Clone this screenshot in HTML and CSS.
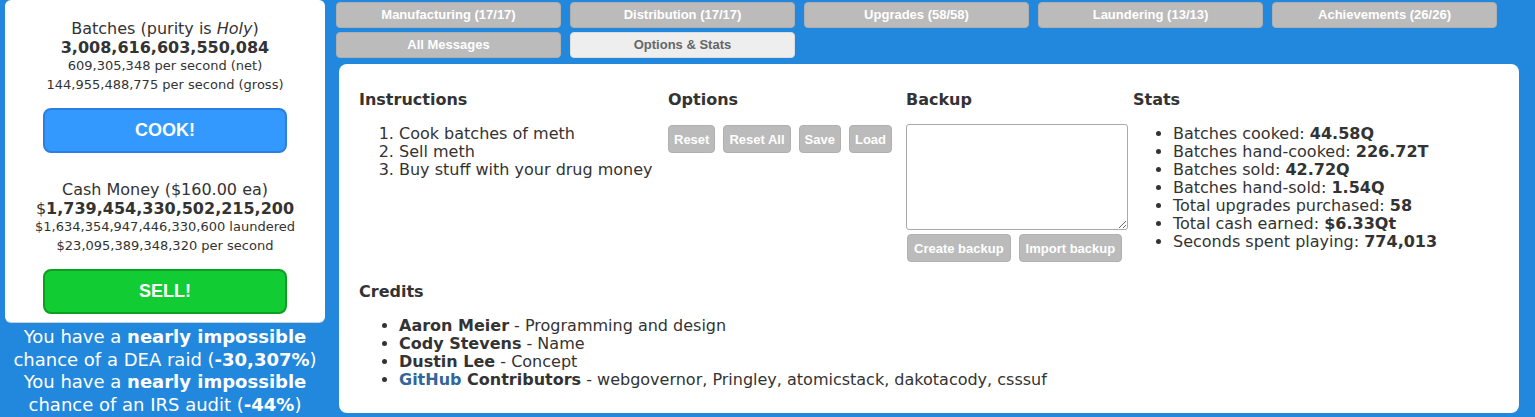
FILE: index.html
```html
<!DOCTYPE html>
<html>
<head>
<meta charset="utf-8">
<link rel="stylesheet" href="styles.css">
</head>
<body>
<div class="page">
  <div class="left">
    <div class="panel">
      <div class="big">Batches (purity is <i>Holy</i>)</div>
      <div class="big"><b>3,008,616,603,550,084</b></div>
      <div class="small">609,305,348 per second (net)</div>
      <div class="small">144,955,488,775 per second (gross)</div>
      <button class="action cook">COOK!</button>
      <div class="big cash">Cash Money ($160.00 ea)</div>
      <div class="big">$<b>1,739,454,330,502,215,200</b></div>
      <div class="small">$1,634,354,947,446,330,600 laundered</div>
      <div class="small">$23,095,389,348,320 per second</div>
      <button class="action sell">SELL!</button>
    </div>
    <div class="risk">
      <div>You have a <b>nearly impossible</b> chance of a DEA raid (<b>-30,307%</b>)</div>
      <div>You have a <b>nearly impossible</b> chance of an IRS audit (<b>-44%</b>)</div>
    </div>
  </div>
  <div class="right">
    <div class="tabs">
      <div class="tab">Manufacturing (17/17)</div>
      <div class="tab">Distribution (17/17)</div>
      <div class="tab">Upgrades (58/58)</div>
      <div class="tab">Laundering (13/13)</div>
      <div class="tab">Achievements (26/26)</div>
      <div class="tab">All Messages</div>
      <div class="tab active">Options &amp; Stats</div>
    </div>
    <div class="main">
      <div class="grid">
        <div class="col">
          <h3>Instructions</h3>
          <ol class="list">
            <li>Cook batches of meth</li>
            <li>Sell meth</li>
            <li>Buy stuff with your drug money</li>
          </ol>
        </div>
        <div class="col">
          <h3>Options</h3>
          <div class="btnrow">
            <button class="btn">Reset</button>
            <button class="btn">Reset All</button>
            <button class="btn">Save</button>
            <button class="btn">Load</button>
          </div>
        </div>
        <div class="col">
          <h3>Backup</h3>
          <textarea class="backup"></textarea>
          <div class="btnrow tight">
            <button class="btn">Create backup</button>
            <button class="btn">Import backup</button>
          </div>
        </div>
        <div class="col">
          <h3>Stats</h3>
          <ul class="list">
            <li>Batches cooked: <b>44.58Q</b></li>
            <li>Batches hand-cooked: <b>226.72T</b></li>
            <li>Batches sold: <b>42.72Q</b></li>
            <li>Batches hand-sold: <b>1.54Q</b></li>
            <li>Total upgrades purchased: <b>58</b></li>
            <li>Total cash earned: <b>$6.33Qt</b></li>
            <li>Seconds spent playing: <b>774,013</b></li>
          </ul>
        </div>
      </div>
      <h3 class="credits">Credits</h3>
      <ul class="list credit-list">
        <li><b>Aaron Meier</b> - Programming and design</li>
        <li><b>Cody Stevens</b> - Name</li>
        <li><b>Dustin Lee</b> - Concept</li>
        <li><b><a href="#">GitHub</a> Contributors</b> - webgovernor, Pringley, atomicstack, dakotacody, csssuf</li>
      </ul>
    </div>
  </div>
</div>
</body>
</html>
```
FILE: styles.css
```css
html, body {
  margin: 0;
  padding: 0;
}
body {
  background: #2288dd;
  font-family: "DejaVu Sans", Verdana, sans-serif;
  color: #333;
  overflow: hidden;
}
.page {
  display: flex;
  align-items: flex-start;
}
.left {
  width: 320px;
  margin-left: 5px;
  flex: none;
}
.panel {
  background: #fff;
  border-radius: 6px;
  padding: 20px 0 8px;
  text-align: center;
  box-shadow: 0 1px 0 #c9d3de;
}
.big {
  font-size: 16px;
  line-height: 18.5px;
}
.small {
  font-size: 13px;
  line-height: 18.5px;
}
.action {
  display: block;
  width: 244px;
  height: 45px;
  margin: 14px auto 0;
  border-radius: 8px;
  color: #fff;
  font-family: "Liberation Sans", Arial, sans-serif;
  font-weight: bold;
  font-size: 18px;
  cursor: pointer;
}
.cook {
  background: #3399ff;
  border: 2px solid #2a7fe0;
}
.sell {
  background: #11cc33;
  border: 2px solid #0c9f22;
  margin-top: 14px;
}
.cash {
  margin-top: 28px;
}
.risk {
  color: #fff;
  font-size: 18px;
  line-height: 22.5px;
  text-align: center;
  margin-top: 4px;
}
.right {
  margin-left: 11px;
  width: 1183px;
  flex: none;
}
.tabs {
  display: flex;
  flex-wrap: wrap;
  gap: 4px 9px;
  margin-top: 2px;
}
.tab {
  width: 225px;
  height: 26px;
  box-sizing: border-box;
  background: #bbbbbb;
  border: 1px solid #afafaf;
  border-radius: 4px;
  color: #fff;
  font-family: "Liberation Sans", Arial, sans-serif;
  font-weight: bold;
  font-size: 13px;
  line-height: 24px;
  text-align: center;
}
.tab.active {
  background: #eeeeee;
  border-color: #dcdcdc;
  color: #666;
}
.main {
  margin: 6px 0 0 3px;
  width: 1180px;
  height: 349px;
  box-sizing: border-box;
  background: #fff;
  border-radius: 8px;
  padding: 27px 20px 0;
}
.grid {
  display: grid;
  grid-template-columns: 309px 238px 227px 1fr;
}
h3 {
  margin: 0 0 16px;
  font-size: 16px;
  line-height: 18px;
  font-weight: bold;
}
.list {
  margin: 2px 0 0;
  padding-left: 40px;
  font-size: 16px;
  line-height: 18px;
}
.credit-list {
  margin-top: 0;
}
.btnrow {
  display: flex;
  gap: 8px;
  margin-top: 0;
}
.btnrow.tight {
  margin-top: 0;
  padding-left: 1px;
}
.btn {
  height: 28px;
  padding: 0 5px;
  background: #bbbbbb;
  border: 1px solid #b0b0b0;
  border-radius: 4px;
  color: #fff;
  font-family: "Liberation Sans", Arial, sans-serif;
  font-weight: bold;
  font-size: 13px;
}
.tight .btn {
  padding: 0 6px;
}
.backup {
  display: block;
  width: 222px;
  height: 106px;
  box-sizing: border-box;
  border: 1px solid #a9a9a9;
  border-radius: 3px;
  margin: -1px 0 4px;
  padding: 2px;
}
.credits {
  margin-top: 21px;
}
a {
  color: #336699;
  text-decoration: none;
}
```
